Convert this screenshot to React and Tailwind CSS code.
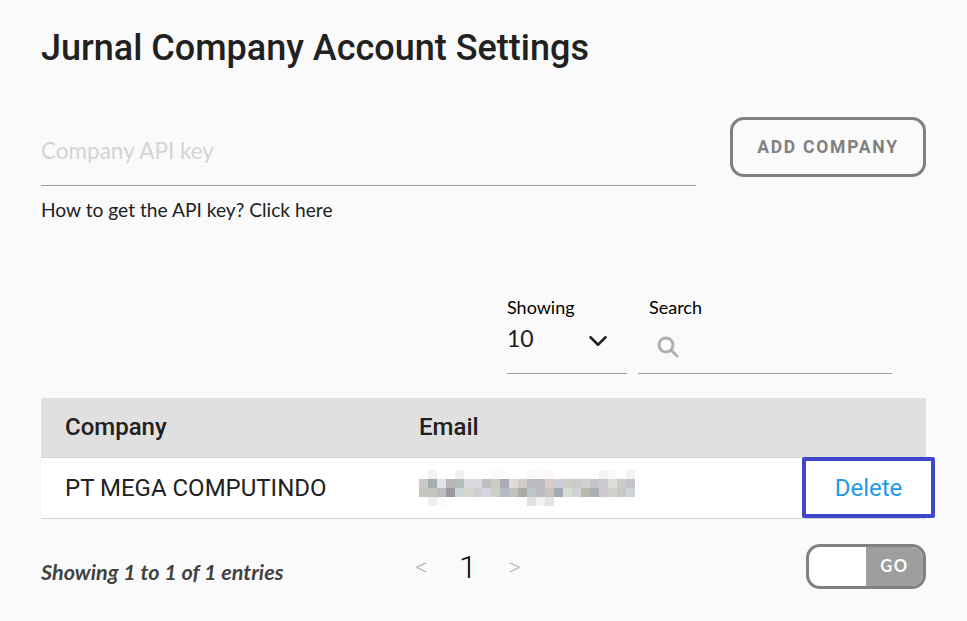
import React from 'react';
import { ChevronDown } from 'lucide-react';

const mosaic = [
  [null, '#f0f3f2', null, null, '#f0f2f1', null, null, null, '#fdf9f7', '#f9fbfd', null, null, '#fbf8f6', '#f9fbfd', '#fbf6f3', null, null, null, null, null, '#f1f2f1', '#f8f8f6', null, '#f1f4f3'],
  ['#c9c9c9', '#a4aeb2', '#e2e3e5', '#b9b5b9', '#b2bcb8', '#d7dade', '#dcdadc', '#bfbfc1', '#cfcbc1', '#a8abb3', '#dddcd9', '#d0ccc7', '#bcbdc1', '#bcbdc1', '#d6cec7', '#cbced8', '#cfcec9', '#cacaca', '#d1d0cd', '#c2c4c8', '#cdc8cf', '#dedcd8', '#cccac8', '#c3c7cc'],
  ['#c6c5c2', '#c5c4c0', '#bcbdc0', '#9a9699', '#ccd6d8', '#d6d6cc', '#d0cdd6', '#d8d4dd', '#d0cdc3', '#b6bac2', '#c1c1bd', '#aeaba3', '#bdc7c8', '#bcbdc0', '#cbc3b9', '#a2a9b3', '#d8dbd6', '#ced3d3', '#bab9ad', '#aab0b0', '#d0cad0', '#d0d0ce', '#c8c7c1', '#cdd3d7'],
  [null, '#eeeeec', '#f8fafc', null, null, null, null, null, null, null, null, null, '#dfdfdd', '#f2f3f1', '#e2e4e8', null, null, null, null, null, null, null, null, null],
];

const BlurredEmail = () => (
  <svg width="216" height="36" viewBox="0 0 216 36" className="block" shapeRendering="crispEdges">
    {mosaic.map((row, y) =>
      row.map((fill, x) => fill && <rect key={`${x}-${y}`} x={x * 9} y={y * 9} width="9" height="9" fill={fill} />)
    )}
  </svg>
);

const App = () => {
  return (
    <div className="h-[621px] overflow-hidden bg-[#fafafa] px-[41px] font-['Lato',sans-serif] text-[#212121]">
      <h1 className="pt-[26px] font-['Roboto',sans-serif] text-[36px] leading-[44px] font-medium">
        Jurnal Company Account Settings
      </h1>

      <div className="mt-[47px] flex items-start justify-between">
        <div className="w-[655px]">
          <input
            placeholder="Company API key"
            className="h-[69px] w-full border-b border-[#9e9e9e] pb-[1px] text-[22.5px] outline-none placeholder:text-[#d4d4d4]"
          />
          <p className="mt-[12px] text-[19.2px] leading-[24px]">How to get the API key? Click here</p>
        </div>
        <button className="h-[60px] w-[196px] rounded-[14px] border-[3px] border-[#808080] font-['Roboto',sans-serif] text-[17.5px] font-bold tracking-[1.75px] text-[#808080]">
          ADD COMPANY
        </button>
      </div>

      <div className="mt-[74px] ml-[466px] flex">
        <div className="w-[120px] border-b border-[#9e9e9e]">
          <p className="text-[18px] leading-[22px] text-black">Showing</p>
          <div className="flex h-[55px] items-start justify-between pr-[15px]">
            <span className="pt-[4px] text-[23px] leading-[32px]">10</span>
            <ChevronDown size={30} strokeWidth={2} className="mt-[8px] -mr-[1px]" />
          </div>
        </div>
        <div className="ml-[11px] w-[254px] border-b border-[#9e9e9e]">
          <p className="pl-[11px] text-[18px] leading-[22px] text-black">Search</p>
          <svg width="24" height="24" viewBox="0 0 24 24" fill="none" stroke="#b0b0b0" strokeWidth="3" className="mt-[17px] ml-[18px]">
            <circle cx="10" cy="10" r="7" />
            <path d="M15 15l6 6" strokeLinecap="round" />
          </svg>
        </div>
      </div>

      <div className="relative mt-[24px]">
        <div className="flex h-[60px] items-center border-b border-[#d4d4d4] bg-[#e0e0e0] pb-[2px] text-[24px] font-medium">
          <span className="w-[378px] pl-[24px] font-['Roboto',sans-serif]">Company</span>
          <span className="font-['Roboto',sans-serif]">Email</span>
        </div>
        <div className="flex h-[61px] items-center border-b border-[#d4d4d4] bg-white">
          <span className="w-[378px] pl-[24px] font-['Roboto',sans-serif] text-[24px]">PT MEGA COMPUTINDO</span>
          <BlurredEmail />
        </div>
        <div className="absolute top-[59px] -right-[9px] flex h-[61px] w-[133px] items-center justify-center rounded-[2px] border-[4px] border-[#3f48cc] bg-white font-['Roboto',sans-serif] text-[24px] text-[#1e9be8]">
          Delete
        </div>
      </div>

      <div className="mt-[24px] flex h-[46px] items-center">
        <span className="w-[373px] pt-[12px] text-[21.6px] font-bold italic text-[#424242]">Showing 1 to 1 of 1 entries</span>
        <span className="text-[26px] font-light text-[#a8a8a8]">&lt;</span>
        <span className="ml-[30px] pt-[2px] font-['Roboto',sans-serif] text-[32px] font-light text-black">1</span>
        <span className="ml-[30px] text-[26px] font-light text-[#b8a8a0]">&gt;</span>
        <div className="ml-auto flex h-[45px] w-[120px] overflow-hidden rounded-[14px] border-[3px] border-[#808080] bg-white">
          <div className="flex-1" />
          <div className="flex w-[57px] items-center justify-center bg-[#9e9e9e] text-[16.5px] font-bold tracking-[1.6px] text-white">GO</div>
        </div>
      </div>
    </div>
  );
};

export default App;
